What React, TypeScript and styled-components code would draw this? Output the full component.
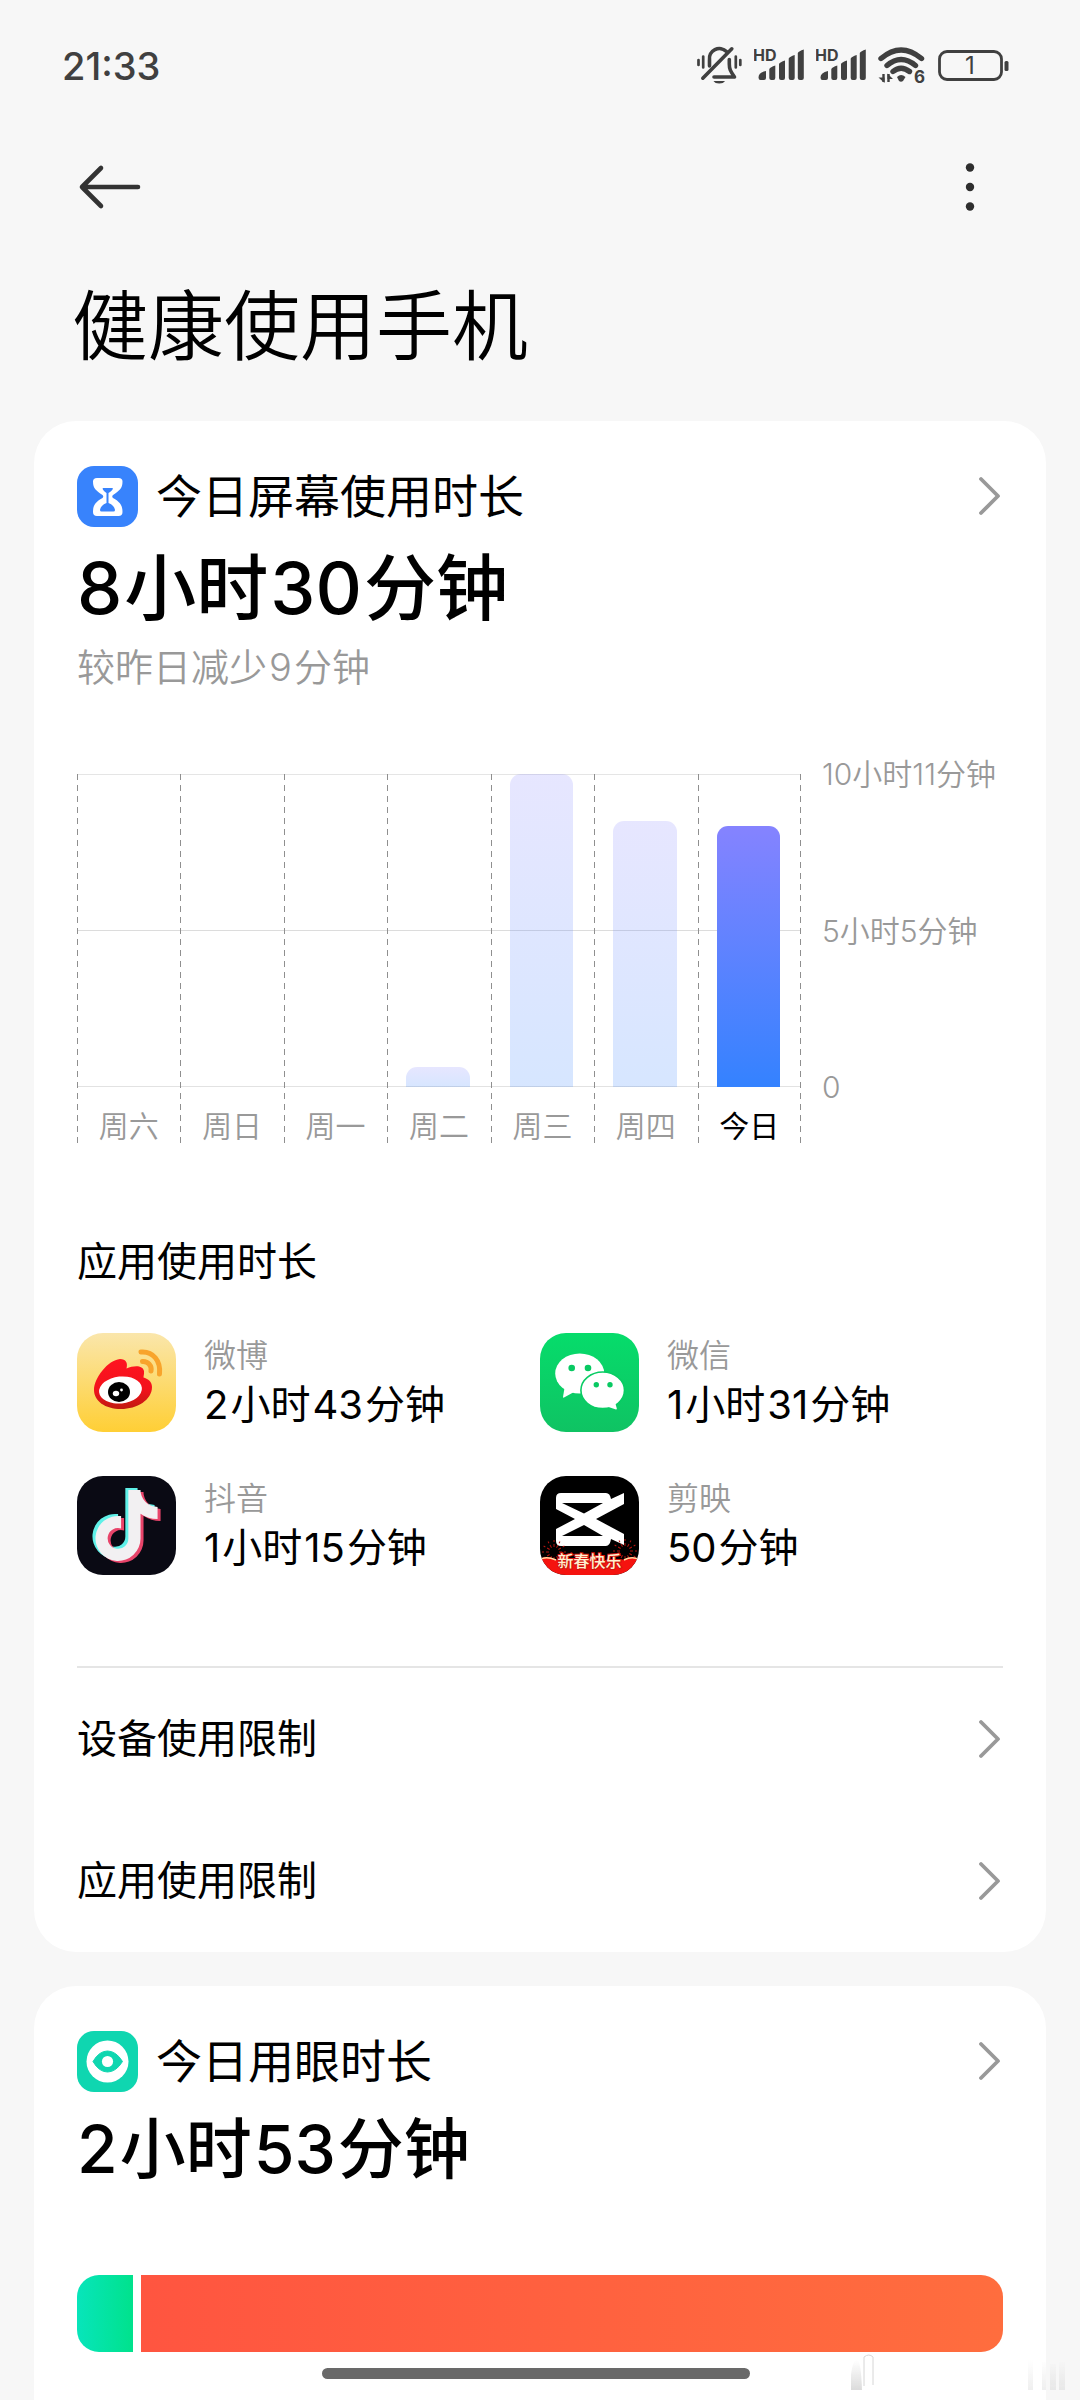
import React from 'react';
import styled, { createGlobalStyle } from 'styled-components';
import { FaTiktok } from 'react-icons/fa6';

const GlobalStyle = createGlobalStyle`
  *, *::before, *::after { box-sizing: border-box; }
  body {
    margin: 0;
    background: #f7f7f7;
    color: #000;
    font-family: Inter, "Noto Sans CJK SC", sans-serif;
  }
  h1, h2, h3, p, ul { margin: 0; padding: 0; }
  button {
    border: 0;
    padding: 0;
    background: none;
    color: inherit;
    font: inherit;
    text-align: left;
    cursor: pointer;
  }
`;

const Page = styled.div`
  display: flex;
  flex-direction: column;
  min-height: 100vh;
  background: #f7f7f7;
`;

const StatusBar = styled.div`
  display: flex;
  align-items: center;
  justify-content: space-between;
  height: 132px;
  padding: 0 70px 0 62px;
  color: #404040;
`;

const Clock = styled.time`
  font-size: 38px;
  font-weight: 500;
`;

const StatusIcons = styled.div`
  display: flex;
  align-items: center;
  gap: 12px;
`;

const AppBar = styled.header`
  display: flex;
  align-items: center;
  justify-content: space-between;
  height: 110px;
  padding: 0 78px;
`;

const IconButton = styled.button`
  display: flex;
  align-items: center;
  justify-content: center;
  min-width: 64px;
  height: 64px;
`;

const PageTitle = styled.h1`
  padding: 30px 72px 41px;
  font-size: 76px;
  font-weight: 350;
  line-height: 108px;
`;

const Main = styled.main`
  display: flex;
  flex: 1;
  flex-direction: column;
  gap: 34px;
  padding: 0 34px;
`;

const Card = styled.section<{ $last?: boolean }>`
  padding: 44px 43px 0;
  border-radius: ${({ $last }) => ($last ? '42px 42px 0 0' : '42px')};
  background: #fff;
  flex: ${({ $last }) => ($last ? '1' : 'none')};
`;

const CardHeader = styled.button`
  display: flex;
  align-items: center;
  gap: 18px;
  width: 100%;
  height: 62px;
`;

const CardTitle = styled.h2`
  flex: 1;
  font-size: 46px;
  font-weight: 400;
  line-height: 62px;
`;

const Total = styled.p<{ $compact?: boolean }>`
  margin-top: 17px;
  font-size: ${({ $compact }) => ($compact ? '66px' : '72px')};
  font-weight: 500;
  line-height: ${({ $compact }) => ($compact ? '80px' : '88px')};
`;

const Num = styled.span`
  margin-right: 2px;
  span + & { margin-left: 2px; }
`;

const Note = styled.p`
  margin-top: 7px;
  color: #999;
  font-size: 38px;
  font-weight: 350;
  line-height: 56px;
`;

const Chart = styled.div`
  display: flex;
  gap: 21px;
  margin-top: 64px;
  color: #999;
  font-size: 30px;
  font-weight: 350;
  line-height: 30px;
`;

const Plot = styled.div`
  display: grid;
  grid-template-columns: repeat(7, 1fr);
  flex: 1;
  margin-top: 15px;
  background:
    linear-gradient(#e5e5e5, #e5e5e5) 0 0 / 100% 1px no-repeat,
    linear-gradient(#dcdcdc, #dcdcdc) 0 156px / 100% 1px no-repeat,
    linear-gradient(#e2e2e2, #e2e2e2) 0 312px / 100% 1px no-repeat;
`;

const Day = styled.div<{ $today: boolean }>`
  position: relative;
  color: ${({ $today }) => ($today ? '#000' : '#999')};
  font-weight: ${({ $today }) => ($today ? 400 : 350)};
  text-align: center;
  &::before, &:last-child::after {
    content: '';
    position: absolute;
    top: 0;
    bottom: 0;
    left: 0;
    width: 1px;
    background: repeating-linear-gradient(#8f8f8f 0 6px, transparent 6px 11px);
  }
  &:last-child::after { left: auto; right: 0; }
`;

const BarSlot = styled.div`
  display: flex;
  align-items: flex-end;
  height: 313px;
  padding: 0 21px 0 19px;
`;

const Bar = styled.div<{ $today: boolean }>`
  width: 100%;
  border-radius: 11px 11px 0 0;
  background: ${({ $today }) =>
    $today
      ? 'linear-gradient(#8583ff, #3482ff)'
      : 'linear-gradient(rgba(133, 131, 255, 0.2), rgba(52, 130, 255, 0.2))'};
`;

const DayLabel = styled.div`
  padding: 24px 0 2px;
`;

const Scale = styled.div`
  display: flex;
  flex-direction: column;
  justify-content: space-between;
  width: 181px;
  height: 343px;
  white-space: nowrap;
`;

const SectionTitle = styled.h3`
  margin-top: 91px;
  font-size: 40px;
  font-weight: 400;
  line-height: 56px;
`;

const AppGrid = styled.ul`
  display: grid;
  grid-template-columns: 1fr 1fr;
  row-gap: 44px;
  margin-top: 43px;
  list-style: none;
`;

const AppItem = styled.li`
  display: flex;
  gap: 28px;
  height: 99px;
`;

const AppName = styled.p`
  color: #999;
  font-size: 32px;
  font-weight: 350;
  line-height: 46px;
`;

const AppTime = styled.p`
  font-size: 40px;
  font-weight: 400;
  line-height: 52px;
`;

const Links = styled.div`
  margin-top: 91px;
  border-top: 2px solid #e5e5e5;
`;

const LinkRow = styled.button`
  display: flex;
  align-items: center;
  justify-content: space-between;
  width: 100%;
  height: 142px;
  font-size: 40px;
  line-height: 56px;
`;

const LinkText = styled.span`
  line-height: 56px;
`;

const EyeBar = styled.div`
  display: flex;
  gap: 8px;
  height: 77px;
  margin-top: 86px;
  border-radius: 22px;
  overflow: hidden;
`;

const GoodPart = styled.div`
  width: 56px;
  background: linear-gradient(90deg, #07e5bb, #00e28c);
`;

const BadPart = styled.div`
  flex: 1;
  background: linear-gradient(90deg, #ff5540, #ff6d3e);
`;

const HomeIndicator = styled.div`
  position: fixed;
  bottom: 21px;
  left: 50%;
  width: 428px;
  height: 11px;
  margin-left: -218px;
  border-radius: 6px;
  background: #696969;
`;

const Shadowmark = styled.div`
  position: fixed;
  right: 10px;
  bottom: 10px;
  line-height: 0;
`;

const MuteIcon = () => (
  <svg width="45" height="40" viewBox="0 0 45 40" fill="none" stroke="#404040" strokeWidth="3.6" strokeLinecap="round">
    <path d="M12.5 20V14A10 10 0 0 1 29.5 5.5" />
    <path d="M32.3 13.5V18c0 5 1 7 5.2 13H17" strokeLinejoin="round" />
    <path d="M5.8 32.2 34.8 2.8" />
    <path d="M16.5 35H28a6.2 4 0 0 1-11.500 0Z" fill="#404040" stroke="none" />
    <path d="M1.500 14v5M6.200 10.500v11M38.800 10.500v11M43.300 14v5" strokeWidth="2.700" />
  </svg>
);

const SignalIcon = () => (
  <svg width="50" height="40" viewBox="0 0 50 40" fill="#404040">
    <text x="-1" y="15" fontFamily="Inter, sans-serif" fontSize="16" fontWeight="700">HD</text>
    <path d="M4.500 31.500q0-5 7.500-6.500v7q0 2-2 2H6.500q-2 0-2-2.500ZM15.300 23q1-2 6-3.500V32q0 2-2 2h-2q-2 0-2-2ZM25 18q1-2 6-3.500V32q0 2-2 2h-2q-2 0-2-2ZM34.700 12.500q1-2 6-3.500V32q0 2-2 2h-2q-2 0-2-2ZM43.800 7q1-2 6-3.500V32q0 2-2 2h-2q-2 0-2-2Z" />
  </svg>
);

const WifiIcon = () => (
  <svg width="48" height="40" viewBox="0 0 48 40" fill="none" stroke="#404040" strokeWidth="5.400" strokeLinecap="round">
    <path d="M3 12.500Q23 -4.500 43.500 12.500" />
    <path d="M9 19.500Q23 7.500 37.500 19.500" />
    <path d="M15 25.500Q23 19 31.500 25.500" />
    <path d="M19 31q4-4 8.500 0l-2.500 4q-2 1.500-4 0Z" fill="#404040" stroke="none" />
    <path d="M5.500 28v8M10.500 36v-8" strokeWidth="2.400" strokeLinecap="butt" />
    <path d="M0.500 31.500 6.500 37V31.500ZM15 33 9.500 27.500V33Z" fill="#404040" stroke="none" />
    <text x="36" y="36.500" fontFamily="Inter, sans-serif" fontSize="17" fontWeight="700" fill="#404040" stroke="none">6</text>
  </svg>
);

const BatteryIcon = () => (
  <svg width="72" height="40" viewBox="0 0 72 40">
    <rect x="1.500" y="5.500" width="62" height="28" rx="7.500" fill="none" stroke="#404040" strokeWidth="2.800" />
    <rect x="66.500" y="15" width="4" height="10" rx="1.500" fill="#404040" />
    <text x="32" y="28" fontFamily="Inter, sans-serif" fontSize="24" fill="#404040" textAnchor="middle">1</text>
  </svg>
);

const BackIcon = () => (
  <svg width="64" height="48" viewBox="0 0 64 48" fill="none" stroke="#333" strokeWidth="4.600" strokeLinecap="round" strokeLinejoin="round">
    <path d="M23 5 4 24l19 19M4 24h56" />
  </svg>
);

const MoreIcon = () => (
  <svg width="12" height="48" viewBox="0 0 12 48" fill="#2e2e2e">
    <circle cx="6" cy="4.500" r="4.200" />
    <circle cx="6" cy="24" r="4.200" />
    <circle cx="6" cy="43.500" r="4.200" />
  </svg>
);

const Chevron = () => (
  <svg width="24" height="42" viewBox="0 0 24 42" fill="none" stroke="#999" strokeWidth="3.800" strokeLinecap="round" strokeLinejoin="round">
    <path d="M2 4 19 21 2 38" />
  </svg>
);

const HourglassIcon = () => (
  <svg width="61" height="61" viewBox="0 0 61 61">
    <rect width="61" height="61" rx="17" fill="#3883fc" />
    <path d="M20 12h21.500q4 0 4 3.500c0 7-3 9-9.500 13.500q-1.500 1.500 0 3C43 36 45.500 39 45.500 46q0 4-4 4H20q-4 0-4-4c0-7 2.500-10 9.500-14q1.500-1.500 0-3C19 24.500 16 22.500 16 15.500q0-3.500 4-3.500Z" fill="#fff" />
    <path d="M26 22h9.500q1.500 1.500-4 5v10c4 1.500 6 4 6.500 7q0 1.500-1.500 1.500h-12q-1.500 0-1.500-1.500c.5-3 2.500-5.500 6.500-7V27q-5-3.500-3.500-5Z" fill="#3883fc" />
  </svg>
);

const EyeIcon = () => (
  <svg width="61" height="61" viewBox="0 0 61 61">
    <rect width="61" height="61" rx="17" fill="#0fd6b0" />
    <circle cx="30.500" cy="30.500" r="21" fill="#fff" />
    <path d="M16 30.500Q22 20 30.500 20T45.500 30.500Q39 41 30.500 41T16 30.500Z" fill="#0fd6b0" stroke="#0fd6b0" strokeLinejoin="round" />
    <circle cx="30.500" cy="30.500" r="5.600" fill="#fff" />
  </svg>
);

const WeiboIcon = () => (
  <svg width="99" height="99" viewBox="0 0 99 99">
    <defs>
      <linearGradient id="weiboBg" x1="0" y1="0" x2="0" y2="1">
        <stop offset="0" stopColor="#fae6ab" />
        <stop offset="1" stopColor="#ffcf35" />
      </linearGradient>
      <linearGradient id="weiboRed" x1="0" y1="0" x2="0" y2="1">
        <stop offset="0" stopColor="#ff1420" />
        <stop offset="0.600" stopColor="#f3121c" />
        <stop offset="1" stopColor="#c01a10" />
      </linearGradient>
    </defs>
    <rect width="99" height="99" rx="26" fill="url(#weiboBg)" />
    <path d="M17 57C17 45 31 27 43 26c6 0 8 4 6.500 9.500C57 32 66 32 67 38c.3 3-.5 4.500-.5 6.500 4 1 8.500 4 8.500 9.500C75 67 60 76 44 76S17 68 17 57Z" fill="url(#weiboRed)" />
    <ellipse cx="43.500" cy="57" rx="21.500" ry="13.500" fill="#fff" transform="rotate(-6 43.500 57)" />
    <ellipse cx="42" cy="59" rx="11" ry="10" fill="#000" />
    <ellipse cx="39" cy="60.500" rx="3.200" ry="2.800" fill="#fff" />
    <circle cx="44.500" cy="57" r="1.400" fill="#fff" />
    <path d="M64 19C76 18 84 28 82.500 41M65.500 28.500C71 28 75 33 74 38" fill="none" stroke="#f8a42c" strokeWidth="5" strokeLinecap="round" />
  </svg>
);

const WechatIcon = () => (
  <svg width="99" height="99" viewBox="0 0 99 99">
    <defs>
      <linearGradient id="wechatBg" x1="0" y1="0" x2="0" y2="1">
        <stop offset="0" stopColor="#06dc6b" />
        <stop offset="1" stopColor="#0fc363" />
      </linearGradient>
    </defs>
    <rect width="99" height="99" rx="26" fill="url(#wechatBg)" />
    <ellipse cx="39.700" cy="40.500" rx="24.500" ry="20" fill="#fff" />
    <path d="M24.500 55 23 64q0 1 1 .5L34 59Z" fill="#fff" />
    <circle cx="31.700" cy="35" r="3.300" fill="#08c962" />
    <circle cx="48" cy="35" r="3.300" fill="#08c962" />
    <ellipse cx="62.700" cy="57.300" rx="21.800" ry="18.300" fill="#fff" stroke="#08cc63" strokeWidth="1.600" />
    <path d="M67 73.500 76 76.500q1 0 .8-1L75 69Z" fill="#fff" />
    <circle cx="56.300" cy="51.700" r="2.700" fill="#08c962" />
    <circle cx="70" cy="51.700" r="2.700" fill="#08c962" />
  </svg>
);

const DouyinIcon = () => (
  <svg width="99" height="99" viewBox="0 0 99 99">
    <rect width="99" height="99" rx="26" fill="#0a0a14" />
    <FaTiktok x="11" y="12" size="71" color="#5ff0e8" />
    <FaTiktok x="17" y="16" size="71" color="#e8446a" />
    <FaTiktok x="14" y="14" size="71" color="#f2f0f2" />
  </svg>
);

const sparks = [0, 30, 60, 90, 120, 150, 180, 210, 240, 270, 300, 330];

const JianyingIcon = () => (
  <svg width="99" height="99" viewBox="0 0 99 99">
    <defs>
      <clipPath id="jyClip"><rect width="99" height="99" rx="26" /></clipPath>
    </defs>
    <g clipPath="url(#jyClip)">
      <rect width="99" height="99" fill="#000" />
      <path
        fillRule="evenodd"
        fill="#fff"
        d="M16 22q0-5 5-5H66q4 0 5 6L84 17V28L56 43 84 58V69L71 63q-1 7-5 7H21q-5 0-5-5V53L35 43 16 33ZM22 27 44 37.500 63 27ZM22 60H63L44 49Z"
      />
      <g stroke="#b3140f" strokeWidth="1" strokeDasharray="3 2">
        {sparks.map((angle) => (
          <g key={angle}>
            <path d="M14 71V64" transform={`rotate(${angle} 14 76)`} />
            <path d="M85 70V63" transform={`rotate(${angle} 85 75)`} />
          </g>
        ))}
      </g>
      <path d="M0 83Q6 79 16 83.500L50 85 84 83.500Q92 79 99 83V99H0Z" fill="#f5130f" />
      <path d="M0 83.500Q6 80 16 84M84 84Q92 80 99 83.500" fill="none" stroke="#ffd9a0" strokeWidth="1.500" />
      <text x="49.500" y="91" textAnchor="middle" fontFamily="'Noto Sans CJK SC', sans-serif" fontSize="16" fontWeight="500" fill="#fff0d0" stroke="#d2140f" strokeWidth="2" paintOrder="stroke">新春快乐</text>
    </g>
  </svg>
);

const days = [
  { label: '周六', minutes: 0 },
  { label: '周日', minutes: 0 },
  { label: '周一', minutes: 0 },
  { label: '周二', minutes: 40 },
  { label: '周三', minutes: 611 },
  { label: '周四', minutes: 519 },
  { label: '今日', minutes: 510, today: true },
];
const maxMinutes = 611;

const apps = [
  { name: '微博', parts: ['2', '小时', '43', '分钟'], Icon: WeiboIcon },
  { name: '微信', parts: ['1', '小时', '31', '分钟'], Icon: WechatIcon },
  { name: '抖音', parts: ['1', '小时', '15', '分钟'], Icon: DouyinIcon },
  { name: '剪映', parts: ['50', '分钟'], Icon: JianyingIcon },
];

const Duration = ({ parts }: { parts: string[] }) => (
  <>
    {parts.map((part, i) => (i % 2 === 0 ? <Num key={i}>{part}</Num> : <span key={i}>{part}</span>))}
  </>
);

export default function App() {
  return (
    <>
      <GlobalStyle />
      <Page>
        <StatusBar>
          <Clock>21:33</Clock>
          <StatusIcons>
            <MuteIcon />
            <SignalIcon />
            <SignalIcon />
            <WifiIcon />
            <BatteryIcon />
          </StatusIcons>
        </StatusBar>
        <AppBar>
          <IconButton aria-label="返回"><BackIcon /></IconButton>
          <IconButton aria-label="更多"><MoreIcon /></IconButton>
        </AppBar>
        <PageTitle>健康使用手机</PageTitle>
        <Main>
          <Card>
            <CardHeader>
              <HourglassIcon />
              <CardTitle>今日屏幕使用时长</CardTitle>
              <Chevron />
            </CardHeader>
            <Total><Duration parts={['8', '小时', '30', '分钟']} /></Total>
            <Note><span>较昨日减少</span><Num>9</Num>分钟</Note>
            <Chart>
              <Plot>
                {days.map(({ label, minutes, today = false }) => (
                  <Day key={label} $today={today}>
                    <BarSlot>
                      <Bar $today={today} style={{ height: `${(minutes / maxMinutes) * 100}%` }} />
                    </BarSlot>
                    <DayLabel>{label}</DayLabel>
                  </Day>
                ))}
              </Plot>
              <Scale>
                <span>10小时11分钟</span>
                <span>5小时5分钟</span>
                <span>0</span>
              </Scale>
            </Chart>
            <SectionTitle>应用使用时长</SectionTitle>
            <AppGrid>
              {apps.map(({ name, parts, Icon }) => (
                <AppItem key={name}>
                  <Icon />
                  <div>
                    <AppName>{name}</AppName>
                    <AppTime><Duration parts={parts} /></AppTime>
                  </div>
                </AppItem>
              ))}
            </AppGrid>
            <Links>
              <LinkRow><LinkText>设备使用限制</LinkText><Chevron /></LinkRow>
              <LinkRow><LinkText>应用使用限制</LinkText><Chevron /></LinkRow>
            </Links>
          </Card>
          <Card $last>
            <CardHeader>
              <EyeIcon />
              <CardTitle>今日用眼时长</CardTitle>
              <Chevron />
            </CardHeader>
            <Total $compact><Duration parts={['2', '小时', '53', '分钟']} /></Total>
            <EyeBar>
              <GoodPart />
              <BadPart />
            </EyeBar>
          </Card>
        </Main>
      </Page>
      <HomeIndicator />
      <Shadowmark>
        <svg width="224" height="36" viewBox="0 0 224 36">
          <defs>
            <linearGradient id="fade" x1="0" y1="0" x2="0" y2="1">
              <stop offset="0" stopColor="#888" stopOpacity="0" />
              <stop offset="1" stopColor="#888" stopOpacity="0.300" />
            </linearGradient>
          </defs>
          <path d="M5 36V20q2-14 6-14t5 30Z" fill="url(#fade)" />
          <path d="M18 32V3q5-4 9 0v28" fill="none" stroke="#d6d6d6" />
          <path d="M182 6h5v30h-5ZM196 8h4v28h-4ZM204 10h6v26h-6ZM213 8h6v28h-6Z" fill="url(#fade)" opacity="0.450" />
        </svg>
      </Shadowmark>
    </>
  );
}
